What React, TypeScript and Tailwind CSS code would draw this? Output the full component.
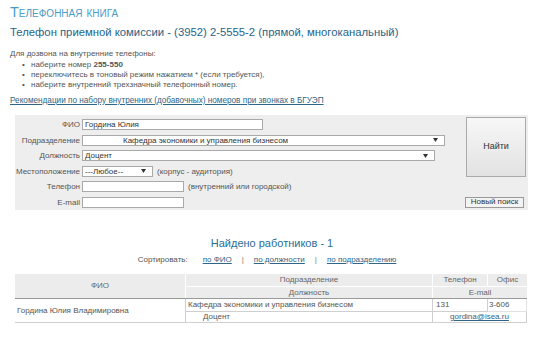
import { ReactNode } from 'react';

const font = { fontFamily: '"Liberation Sans", Arial, sans-serif' };

function Arrow() {
  return (
    <svg width="5" height="4" viewBox="0 0 5 4" className="shrink-0">
      <path d="M0 0 L5 0 L2.5 4 Z" fill="#333" />
    </svg>
  );
}

function Label({ children }: { children: ReactNode }) {
  return <div className="h-[11px] text-right leading-[11px] text-[#555]">{children}</div>;
}

function SelectBox({ width, value, pad = 'pl-[2px]' }: { width: string; value: string; pad?: string }) {
  return (
    <div className={`${width} flex h-[11px] items-center justify-between border border-[#a9a9a9] bg-white pr-[6px] ${pad}`}>
      <span className="leading-[9px] text-[#333]">{value}</span>
      <Arrow />
    </div>
  );
}

function Input({ width, value = '' }: { width: string; value?: string }) {
  return (
    <div className={`${width} h-[11px] border border-[#a9a9a9] bg-white pl-[2px] leading-[9px] text-[#333]`}>
      {value}
    </div>
  );
}

export default function App() {
  return (
    <div className="h-[343px] w-[540px] overflow-hidden bg-white px-[10px] text-[8px] text-[#555]" style={font}>
      <div className="mt-[2px] h-[20px] text-[14.5px] leading-[20px] text-[#4a9cc7]" style={{ fontVariant: 'small-caps' }}>
        Телефонная книга
      </div>
      <div className="mt-[3px] h-[14px] text-[11.3px] leading-[14px] text-[#1f6489]">
        Телефон приемной комиссии - (3952) 2-5555-2 (прямой, многоканальный)
      </div>

      <div className="mt-[10px] leading-[10px]">Для дозвона на внутренние телефоны:</div>
      <ul className="mt-px pl-[12px] leading-[10px]">
        <li className="flex">
          <span className="w-[9px]">•</span>
          <span>
            наберите номер <b className="font-bold">255-550</b>
          </span>
        </li>
        <li className="flex">
          <span className="w-[9px]">•</span>
          <span>переключитесь в тоновый режим нажатием * (если требуется),</span>
        </li>
        <li className="flex">
          <span className="w-[9px]">•</span>
          <span>наберите внутренний трехзначный телефонный номер.</span>
        </li>
      </ul>
      <div className="mt-[6px] text-[8.2px] leading-[10px]">
        <a className="text-[#2f6586] underline">
          Рекомендации по набору внутренних (добавочных) номеров при звонках в БГУЭП
        </a>
      </div>

      {/* search form */}
      <div className="ml-[5px] mt-[9px] grid h-[95px] w-[513px] grid-cols-[65px_381px_62px] grid-rows-[11px_11px_11px_11px_11px_11px] gap-x-[2px] gap-y-[4.6px] bg-[#eeeeee] pr-[3px] pt-[4px]">
        <Label>ФИО</Label>
        <Input width="w-[181px]" value="Гордина Юлия" />
        <div className="row-span-4 -mt-[2px] ml-px flex h-[60px] w-[60px] items-center justify-center border border-[#aaa] bg-gradient-to-b from-[#f7f7f7] to-[#e2e2e2] text-[9px] text-[#333]">
          Найти
        </div>

        <Label>Подразделение</Label>
        <SelectBox width="w-[363px]" value="Кафедра экономики и управления бизнесом" pad="pl-[40px]" />

        <Label>Должность</Label>
        <SelectBox width="w-[353px]" value="Доцент" />

        <Label>Местоположение</Label>
        <div className="flex items-center gap-[4px]">
          <SelectBox width="w-[71px]" value="---Любое--" />
          <span className="leading-[11px] text-[#555]">(корпус - аудитория)</span>
        </div>

        <Label>Телефон</Label>
        <div className="col-span-2 flex items-center gap-[4px]">
          <Input width="w-[102px]" />
          <span className="leading-[11px] text-[#555]">(внутренний или городской)</span>
        </div>

        <Label>E-mail</Label>
        <Input width="w-[102px]" />
        <div className="flex h-[11px] w-[59px] items-center justify-center border border-[#999] bg-[#f3f3f3] text-[#333]">
          Новый поиск
        </div>
      </div>

      <div className="mt-[27px] pl-[4px] text-center text-[11px] leading-[12px] text-[#2a6e96]">Найдено работников - 1</div>

      <div className="mt-[6px] flex justify-center pr-[6px] leading-[10px]">
        <span className="mr-[15px] text-[#555]">Сортировать:</span>
        <a className="text-[#2f6586] underline">по ФИО</a>
        <span className="mx-[10px] text-[#777]">|</span>
        <a className="text-[#2f6586] underline">по должности</a>
        <span className="mx-[10px] text-[#777]">|</span>
        <a className="text-[#2f6586] underline">по подразделению</a>
      </div>

      {/* results */}
      <div className="ml-[5px] mt-[9px] grid w-[512px] grid-cols-[171px_247px_55px_39px] grid-rows-[13px_11px_1px_13px_11px] leading-[10px]">
        <div className="row-span-2 flex items-center justify-center border-r border-white bg-[#ececec] text-[#666]">ФИО</div>
        <div className="flex items-center justify-center border-b border-r border-white bg-[#ececec] text-[#666]">Подразделение</div>
        <div className="flex items-center justify-center border-b border-r border-white bg-[#ececec] text-[#666]">Телефон</div>
        <div className="flex items-center justify-center border-b border-white bg-[#ececec] text-[#666]">Офис</div>
        <div className="flex items-center justify-center border-r border-white bg-[#ececec] text-[#666]">Должность</div>
        <div className="col-span-2 flex items-center justify-center bg-[#ececec] text-[#666]">E-mail</div>

        <div className="col-span-4 bg-[#9a9a9a]" />

        <div className="row-span-2 flex items-center border-b border-r border-[#cfcfcf] pl-[2px]">Гордина Юлия Владимировна</div>
        <div className="flex items-center border-b border-r border-[#cfcfcf] pl-[2px]">Кафедра экономики и управления бизнесом</div>
        <div className="flex items-center border-b border-r border-[#cfcfcf] pl-[3px]">131</div>
        <div className="flex items-center border-b border-r border-[#e2e2e2] pl-[1px]">3-606</div>
        <div className="flex items-center border-b border-r border-[#cfcfcf] pl-[17px]">Доцент</div>
        <div className="col-span-2 flex items-center justify-center border-b border-r border-[#cfcfcf]">
          <a className="text-[#2f6586] underline">gordina@isea.ru</a>
        </div>
      </div>
    </div>
  );
}
